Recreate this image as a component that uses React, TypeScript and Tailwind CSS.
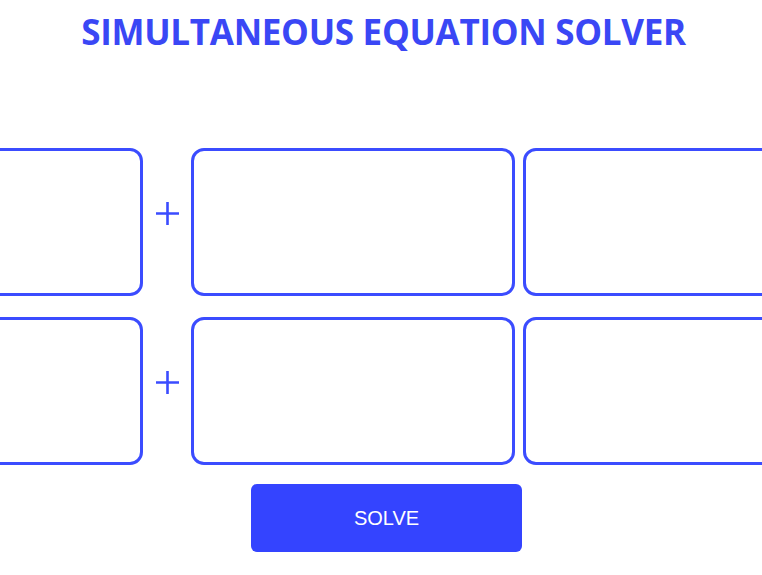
export default function App() {
  const rows = [0, 1];

  return (
    <div className="min-h-screen w-full overflow-hidden bg-white" style={{ fontFamily: "'Open Sans', sans-serif" }}>
      <h1 className="pl-[5px] pt-[10px] text-center text-[35px] font-bold leading-[44px] tracking-[-0.3px] text-[#3a47f5]">
        SIMULTANEOUS EQUATION SOLVER
      </h1>

      <div className="mt-[94px] flex flex-col gap-[21px]">
        {rows.map((r) => (
          <div key={r} className="flex justify-center">
            <div className="h-[148px] w-[324px] shrink-0 rounded-[13px] border-[3px] border-[#3b4cff]" />
            <div className="flex w-[48px] shrink-0 items-center justify-center">
              <svg width="23" height="23" viewBox="0 0 23 23" className="-mt-[17px]">
                <path d="M11.5 0V23M0 11.5H23" stroke="#3b4cff" strokeWidth="2.6" />
              </svg>
            </div>
            <div className="h-[148px] w-[324px] shrink-0 rounded-[13px] border-[3px] border-[#3b4cff]" />
            <div className="ml-[8px] h-[148px] w-[420px] shrink-0 rounded-[13px] border-[3px] border-[#3b4cff]" />
          </div>
        ))}
      </div>

      <div className="mt-[19px] flex justify-center pl-[11px]">
        <button
          className="h-[68px] w-[271px] rounded-[6px] bg-[#3444ff] text-[20px] text-white"
          style={{ fontFamily: "'Liberation Sans', Arial, sans-serif" }}
        >
          SOLVE
        </button>
      </div>
    </div>
  );
}
